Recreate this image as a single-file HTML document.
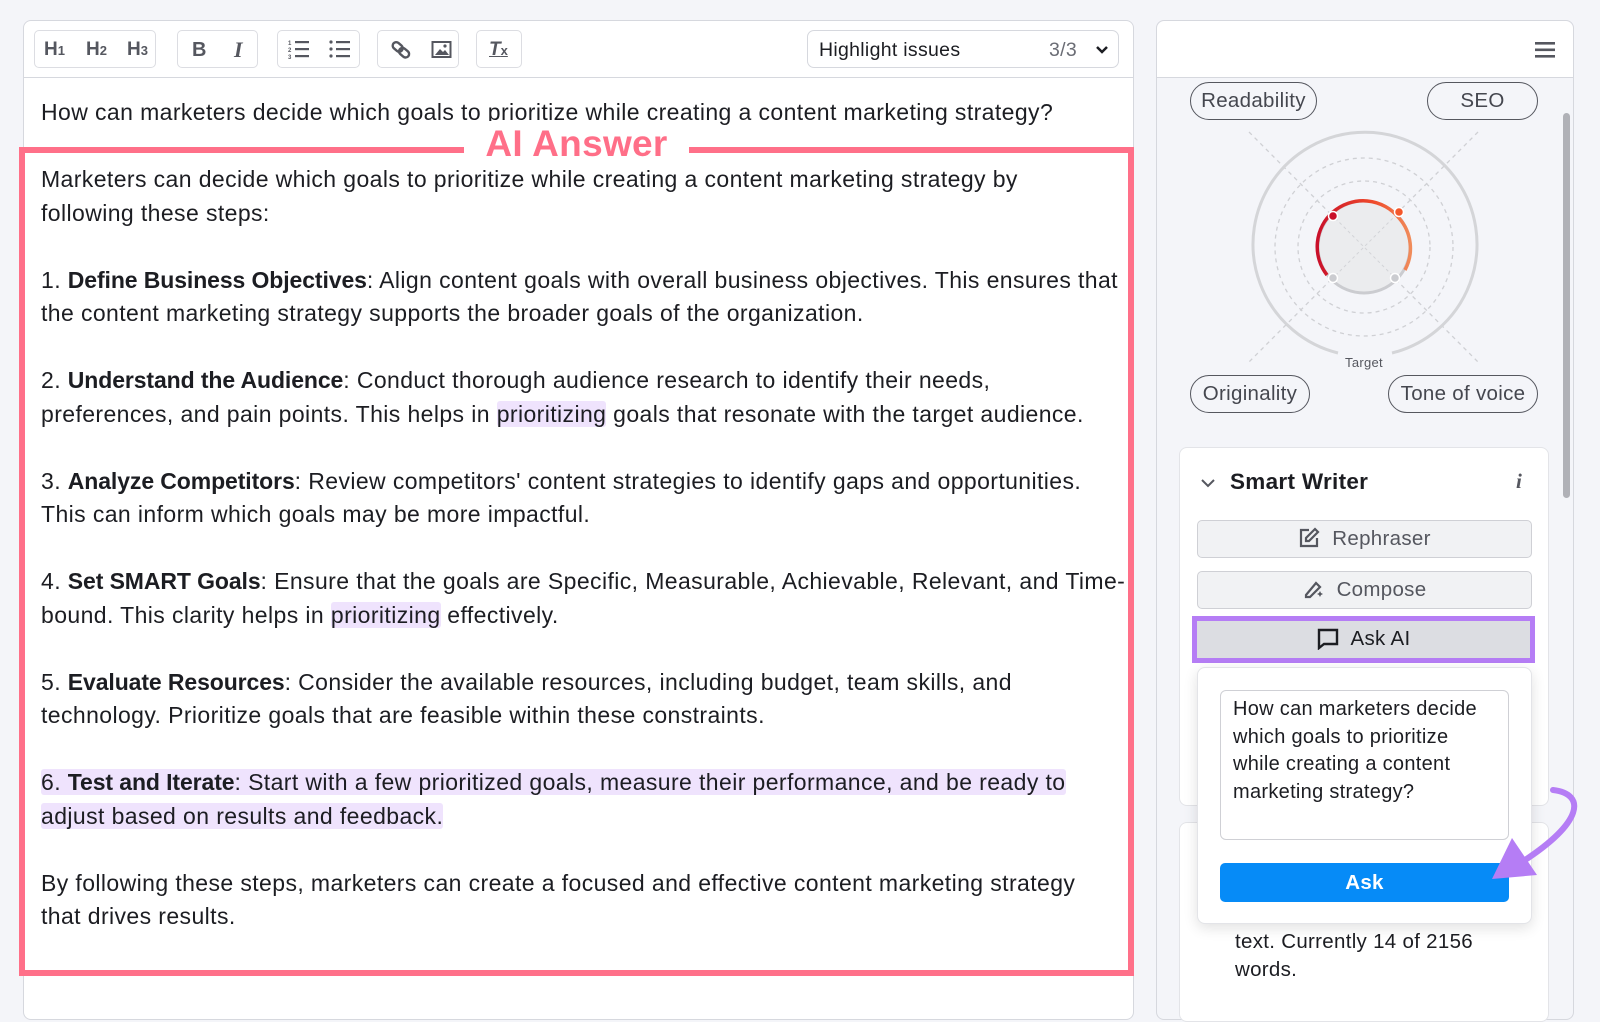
<!DOCTYPE html>
<html><head><meta charset="utf-8">
<style>
*{box-sizing:border-box;margin:0;padding:0}
body{width:1600px;height:998px;background:#f4f5f9;font-family:"Liberation Sans",sans-serif;color:#1c1d22;position:relative;overflow:hidden;letter-spacing:0.3px}
.abs{position:absolute}
#ed{left:23px;top:20px;width:1111px;height:1000px;background:#fff;border:1.5px solid #d6d8de;border-radius:8px}
#tb{left:23px;top:20px;width:1111px;height:58px;border-bottom:1.5px solid #d6d8de}
.grp{position:absolute;top:30px;height:38px;border:1.5px solid #dcdde2;border-radius:5px;background:#fff;color:#55575f;font-size:19px;font-weight:bold;letter-spacing:0}
.grp span{position:absolute;top:8px}
#hl{left:807px;top:30px;width:312px;height:38px;border:1.5px solid #d6d8de;border-radius:7px;font-size:19.5px}
.txt{position:absolute;left:41px;font-size:23px;letter-spacing:0.4px;line-height:33.5px;white-space:nowrap;color:#1c1d22}
.txt b{letter-spacing:-0.1px}
.hlp{background:#efe3fd;border-radius:3px}
#pink{left:19px;top:147px;width:1115px;height:829px;border:6px solid #ff7089}
#ai{left:464px;top:121px;width:225px;text-align:center;background:#fff;color:#ff6f88;font-size:37px;font-weight:bold;line-height:46px;letter-spacing:0.3px}
#rp{left:1156px;top:20px;width:418px;height:1000px;background:#f4f5f9;border:1.5px solid #d6d8de;border-radius:8px;overflow:hidden}
#rph{left:1157px;top:21px;width:416px;height:57px;background:#fff;border-bottom:1.5px solid #d6d8de;border-radius:8px 8px 0 0}
.pill{position:absolute;height:38px;border:1.5px solid #55575f;border-radius:19px;font-size:20.5px;color:#45474f;text-align:center;line-height:36px}
.card{position:absolute;background:#fff;border:1px solid #e3e4e8;border-radius:8px}
.btn{position:absolute;left:1197px;width:335px;height:38px;border:1.5px solid #cfd0d5;border-radius:5px;background:#f1f2f4;color:#55575f;font-size:20.5px;text-align:center;line-height:35px}
</style></head><body>
<div id="ed" class="abs"></div>
<div id="tb" class="abs"></div>
<div class="grp" style="left:34px;width:122px"><span style="left:9px">H<small style="font-size:13px">1</small></span><span style="left:51px">H<small style="font-size:13px">2</small></span><span style="left:92px">H<small style="font-size:13px">3</small></span></div>
<div class="grp" style="left:177px;width:81px"><span style="left:14px;font-size:20px">B</span><span style="left:56px;font-style:italic;font-family:'Liberation Serif',serif;font-size:22px;top:6px">I</span></div>
<div class="grp" style="left:277px;width:83px">
<svg class="abs" style="left:10px;top:8px" width="22" height="20"><g fill="#55575f"><rect x="7" y="2" width="14" height="2.2"/><rect x="7" y="9" width="14" height="2.2"/><rect x="7" y="16" width="14" height="2.2"/><text x="0" y="6" font-size="6" font-family="Liberation Sans">1</text><text x="0" y="13" font-size="6" font-family="Liberation Sans">2</text><text x="0" y="20" font-size="6" font-family="Liberation Sans">3</text></g></svg>
<svg class="abs" style="left:51px;top:8px" width="22" height="20"><g fill="#55575f"><circle cx="2" cy="3" r="1.6"/><circle cx="2" cy="10" r="1.6"/><circle cx="2" cy="17" r="1.6"/><rect x="7" y="2" width="14" height="2.2"/><rect x="7" y="9" width="14" height="2.2"/><rect x="7" y="16" width="14" height="2.2"/></g></svg>
</div>
<div class="grp" style="left:377px;width:82px">
<svg class="abs" style="left:13px;top:8px" width="22" height="22" fill="none" stroke="#55575f" stroke-width="2.4"><rect x="1" y="4" width="11" height="7" rx="3.5" transform="rotate(40 6 8)"/><rect x="8" y="10" width="11" height="7" rx="3.5" transform="rotate(40 13 13)"/></svg>
<svg class="abs" style="left:53px;top:9px" width="22" height="20"><rect x="1.5" y="2" width="18" height="15" fill="none" stroke="#55575f" stroke-width="2"/><path d="M4 15 L9 9 L12 12 L14 10 L18 15Z" fill="#55575f"/><circle cx="14" cy="6" r="1.6" fill="#55575f"/></svg>
</div>
<div class="grp" style="left:476px;width:46px"><span style="left:12px;font-style:italic;text-decoration:underline;font-size:19px">T<small style="font-size:13px;font-style:normal">x</small></span></div>
<div id="hl" class="abs"><span class="abs" style="left:11px;top:8px">Highlight issues</span><span class="abs" style="left:241px;top:8px;color:#6b6d75">3/3</span>
<svg class="abs" style="left:287px;top:14px" width="14" height="10"><path d="M2 2 L7 7 L12 2" fill="none" stroke="#1c1d22" stroke-width="2.5"/></svg></div>

<div class="txt" style="top:96px">How can marketers decide which goals to prioritize while creating a content marketing strategy?</div>
<div id="pink" class="abs"></div>
<div id="ai" class="abs">AI Answer</div>
<div class="txt" style="top:163px">Marketers can decide which goals to prioritize while creating a content marketing strategy by<br>following these steps:<br><br>
1. <b>Define Business Objectives</b>: Align content goals with overall business objectives. This ensures that<br>the content marketing strategy supports the broader goals of the organization.<br><br>
2. <b>Understand the Audience</b>: Conduct thorough audience research to identify their needs,<br>preferences, and pain points. This helps in <span class="hlp">prioritizing</span> goals that resonate with the target audience.<br><br>
3. <b>Analyze Competitors</b>: Review competitors' content strategies to identify gaps and opportunities.<br>This can inform which goals may be more impactful.<br><br>
4. <b>Set SMART Goals</b>: Ensure that the goals are Specific, Measurable, Achievable, Relevant, and Time-<br>bound. This clarity helps in <span class="hlp">prioritizing</span> effectively.<br><br>
5. <b>Evaluate Resources</b>: Consider the available resources, including budget, team skills, and<br>technology. Prioritize goals that are feasible within these constraints.<br><br>
<span class="hlp">6. <b>Test and Iterate</b>: Start with a few prioritized goals, measure their performance, and be ready to</span><br><span class="hlp">adjust based on results and feedback.</span><br><br>
By following these steps, marketers can create a focused and effective content marketing strategy<br>that drives results.</div>

<div id="rp" class="abs"></div>
<div id="rph" class="abs"></div>
<svg class="abs" style="left:1535px;top:41px" width="22" height="18"><g fill="#55575f"><rect y="1" width="20" height="2.6"/><rect y="7.5" width="20" height="2.6"/><rect y="14" width="20" height="2.6"/></g></svg>
<div class="abs" style="left:1563px;top:113px;width:7px;height:385px;background:#b0b1b7;border-radius:4px"></div>

<svg class="abs" style="left:1230px;top:110px" width="270" height="270" viewBox="1230 110 270 270">
<defs><linearGradient id="g" x1="0" y1="0" x2="1" y2="0"><stop offset="0" stop-color="#c9102a"/><stop offset="0.6" stop-color="#ef4a2a"/><stop offset="1" stop-color="#f08b5a"/></linearGradient></defs>
<g fill="none" stroke="#cfd0d4" stroke-width="1.3" stroke-dasharray="4 4"><line x1="1249" y1="132" x2="1478" y2="362"/><line x1="1478" y1="132" x2="1249" y2="362"/><circle cx="1364" cy="247" r="89"/><circle cx="1364" cy="247" r="66"/></g>
<path d="M1338 353 A112 112 0 1 1 1392 353" fill="none" stroke="#d4d5d8" stroke-width="3"/>
<circle cx="1364" cy="247" r="46" fill="#ebecee" stroke="#cbccd0" stroke-width="3"/>
<g stroke="#d3d4d8" stroke-width="1" stroke-dasharray="3 3"><line x1="1331" y1="214" x2="1397" y2="280"/><line x1="1397" y1="214" x2="1331" y2="280"/></g>
<path d="M1327 275 A46 46 0 0 1 1333 212 A46 46 0 0 1 1399 218 A46 46 0 0 1 1405 270" fill="none" stroke="url(#g)" stroke-width="3.5"/>
<circle cx="1333" cy="216" r="4.5" fill="#c9102a" stroke="#fff" stroke-width="1.5"/>
<circle cx="1399" cy="212" r="4.5" fill="#f4562a" stroke="#fff" stroke-width="1.5"/>
<circle cx="1333" cy="278" r="4.5" fill="#cbccd0" stroke="#fff" stroke-width="1.5"/>
<circle cx="1395" cy="278" r="4.5" fill="#cbccd0" stroke="#fff" stroke-width="1.5"/>
<text x="1364" y="367" font-size="13" fill="#55575f" text-anchor="middle" font-family="Liberation Sans">Target</text>
</svg>
<div class="pill" style="left:1190px;top:82px;width:127px">Readability</div>
<div class="pill" style="left:1427px;top:82px;width:111px">SEO</div>
<div class="pill" style="left:1190px;top:375px;width:120px">Originality</div>
<div class="pill" style="left:1388px;top:375px;width:150px">Tone of voice</div>

<div class="card" style="left:1179px;top:447px;width:370px;height:359px"></div>
<svg class="abs" style="left:1200px;top:477px" width="16" height="12"><path d="M2 3 L8 9 L14 3" fill="none" stroke="#55575f" stroke-width="2"/></svg>
<div class="abs" style="left:1230px;top:469px;font-size:22.5px;font-weight:bold">Smart Writer</div>
<div class="abs" style="left:1516px;top:469px;font-size:21px;font-weight:bold;font-style:italic;color:#55575f;font-family:'Liberation Serif',serif">i</div>
<div class="btn" style="top:520px"><svg style="vertical-align:-4px;margin-right:12px" width="22" height="22" fill="none" stroke="#55575f" stroke-width="2.2"><path d="M11 3H3v16h16v-8"/><path d="M17 2l3 3-9 9H8v-3z"/></svg>Rephraser</div>
<div class="btn" style="top:571px"><svg style="vertical-align:-4px;margin-right:12px" width="22" height="22" fill="#55575f"><path d="M3 17 L13 5 L17 9 L7 19 L3 19Z" fill="none" stroke="#55575f" stroke-width="2.2"/><path d="M17 13l1 2 2 1-2 1-1 2-1-2-2-1 2-1z"/></svg>Compose</div>
<div class="abs" style="left:1192px;top:616px;width:343px;height:47px;border:5px solid #b57df5;background:#dcdde2;font-size:20.5px;text-align:center;line-height:36px"><svg style="vertical-align:-5px;margin-right:12px" width="22" height="22" fill="none" stroke="#1c1d22" stroke-width="2.4"><path d="M2 2h18v14H7l-5 4z"/></svg>Ask AI</div>

<div class="card" style="left:1179px;top:822px;width:370px;height:200px"></div>
<div class="abs" style="left:1235px;top:928px;font-size:20.5px;line-height:28px">text. Currently 14 of 2156<br>words.</div>
<div class="abs" style="left:1197px;top:667px;width:335px;height:257px;background:#fff;border:1px solid #e3e4e8;border-radius:8px;box-shadow:0 4px 14px rgba(0,0,0,0.12)"></div>
<div class="abs" style="left:1220px;top:690px;width:289px;height:150px;border:1.5px solid #cfd0d5;border-radius:6px;padding:5px 12px;font-size:20px;line-height:27.5px;white-space:nowrap">How can marketers decide<br>which goals to prioritize<br>while creating a content<br>marketing strategy?</div>
<div class="abs" style="left:1220px;top:863px;width:289px;height:39px;background:#068bf7;border-radius:5px;color:#fff;font-weight:bold;font-size:20.5px;text-align:center;line-height:39px">Ask</div>

<svg class="abs" style="left:0;top:0" width="1600" height="998">
<path d="M1553 790 C1586 794 1584 822 1522 862" fill="none" stroke="#b57df5" stroke-width="6" stroke-linecap="round"/>
<path d="M1492 879 L1512 838 L1537 875Z" fill="#b57df5"/>
</svg>
</body></html>
